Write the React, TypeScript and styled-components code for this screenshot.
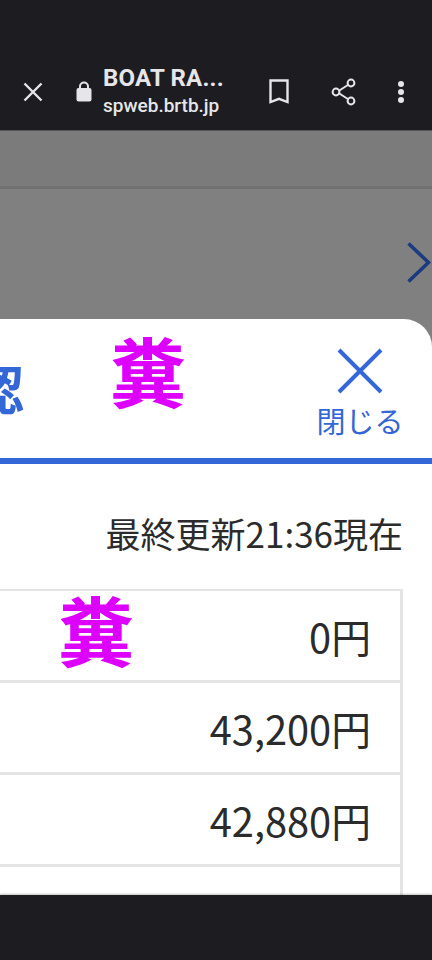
import styled, { createGlobalStyle } from 'styled-components';

const GlobalStyle = createGlobalStyle`
  html, body {
    margin: 0;
    padding: 0;
    background: #1c1c21;
  }

  * {
    box-sizing: border-box;
  }
`;

const Screen = styled.div`
  position: relative;
  display: flex;
  flex-direction: column;
  width: 432px;
  height: 960px;
  overflow: hidden;
  font-family: 'Noto Sans CJK JP', 'Noto Sans', sans-serif;
  background: #1c1c21;
`;

const StatusGap = styled.div`
  height: 50px;
  flex: none;
`;

const BrowserBar = styled.header`
  display: flex;
  align-items: center;
  height: 81px;
  flex: none;
  padding: 3px 0 0 23px;
  color: #e6e6ea;
  border-bottom: 1px solid #55555c;
`;

const TitleBlock = styled.div`
  display: flex;
  flex-direction: column;
  width: 150px;
  margin-left: 11px;
  font-family: Roboto, sans-serif;
`;

const Title = styled.div`
  font-size: 24px;
  line-height: 28px;
  font-weight: 700;
  letter-spacing: 0.2px;
`;

const Url = styled.div`
  font-size: 19px;
  line-height: 28px;
  font-weight: 500;
`;

const BarIcon = styled.svg<{ $left: number }>`
  flex: none;
  margin-left: ${(p) => p.$left}px;
`;

const Main = styled.main`
  flex: 1;
  display: flex;
  flex-direction: column;
  min-height: 0;
  background: #808080;
`;

const Backdrop = styled.div`
  height: 188px;
  flex: none;
  display: flex;
  flex-direction: column;
`;

const BackdropStrip = styled.div`
  height: 58px;
  background: #7b7b7b;
  border-bottom: 3px solid #717171;
`;

const BackdropBody = styled.div`
  display: flex;
  justify-content: flex-end;
  padding: 53px 1px 0 0;
`;

const Sheet = styled.section`
  flex: 1;
  display: flex;
  flex-direction: column;
  min-height: 0;
  overflow: hidden;
  background: #fff;
  border-top-right-radius: 28px;
  border-top-left-radius: 28px;
  margin-left: -28px;
`;

const SheetHeader = styled.div`
  display: flex;
  align-items: flex-start;
  justify-content: space-between;
  height: 145px;
  flex: none;
  padding: 0 28px 0 0;
  border-bottom: 6px solid #3366d6;
`;

const HeaderTitle = styled.h2`
  margin: 33px 0 0 0;
  font-size: 52px;
  line-height: 72px;
  font-weight: 700;
  color: #3366d6;
`;

const CloseButton = styled.button`
  display: flex;
  flex-direction: column;
  align-items: center;
  width: 88px;
  margin: 29px 0 0 0;
  padding: 0;
  border: 0;
  background: none;
  color: #3366d6;
  font-family: inherit;
  font-size: 29px;
  line-height: 40px;
`;

const CloseIcon = styled.svg`
  margin-bottom: 6px;
`;

const Updated = styled.p`
  margin: 45px 29px 0 0;
  text-align: right;
  font-size: 35px;
  line-height: 48px;
  color: #2b2b2b;
`;

const Table = styled.div`
  margin: 32px 29px 0 0;
  border-top: 2px solid #e4e4e4;
  border-right: 3px solid #e4e4e4;
`;

const Row = styled.div`
  display: flex;
  align-items: center;
  justify-content: flex-end;
  height: 92px;
  padding-right: 29px;
  border-bottom: 3px solid #e4e4e4;
  font-size: 39.8px;
  color: #2b2b2b;
`;

const BottomBar = styled.footer`
  height: 65px;
  flex: none;
  background: #1c1c21;
  box-shadow: 0 -1px 2px rgba(0, 0, 0, 0.25);
`;

const Sticker = styled.span<{ $left: number; $top: number }>`
  position: absolute;
  left: ${(p) => p.$left}px;
  top: ${(p) => p.$top}px;
  font-family: 'Noto Sans CJK SC', 'Noto Sans CJK JP', sans-serif;
  font-size: 76px;
  line-height: 80px;
  font-weight: 700;
  color: #dd00ff;
`;

export default function App() {
  return (
    <>
      <GlobalStyle />
      <Screen>
        <StatusGap />
        <BrowserBar>
          <svg width="20" height="20" viewBox="0 0 20 20">
            <path d="M1.5 1.5l17 17M18.5 1.5l-17 17" stroke="#e6e6ea" strokeWidth="2.4" fill="none" />
          </svg>
          <BarIcon $left={33} width="16" height="21" viewBox="0 0 16 21">
            <path d="M4 8V5.5a4 4 0 0 1 8 0V8" stroke="#e6e6ea" strokeWidth="2" fill="none" />
            <rect x="0.5" y="7" width="15" height="13.5" rx="2" fill="#e6e6ea" />
          </BarIcon>
          <TitleBlock>
            <Title>BOAT RA...</Title>
            <Url>spweb.brtb.jp</Url>
          </TitleBlock>
          <BarIcon $left={16} width="20" height="25" viewBox="0 0 20 25">
            <path d="M1.5 1.5h17v21.5L10 19.8 1.5 23z" stroke="#e6e6ea" strokeWidth="2.4" fill="none" />
          </BarIcon>
          <BarIcon $left={42} width="25" height="28" viewBox="0 0 25 28">
            <path d="M6 14L20 5M6 14l14 9" stroke="#e6e6ea" strokeWidth="2" fill="none" />
            <circle cx="5" cy="14" r="3.4" fill="#1c1c21" stroke="#e6e6ea" strokeWidth="2" />
            <circle cx="20" cy="5" r="3.4" fill="#1c1c21" stroke="#e6e6ea" strokeWidth="2" />
            <circle cx="20" cy="23" r="3.4" fill="#1c1c21" stroke="#e6e6ea" strokeWidth="2" />
          </BarIcon>
          <BarIcon $left={41} width="8" height="22" viewBox="0 0 8 22">
            <circle cx="4" cy="3" r="3" fill="#e6e6ea" />
            <circle cx="4" cy="11" r="3" fill="#e6e6ea" />
            <circle cx="4" cy="19" r="3" fill="#e6e6ea" />
          </BarIcon>
        </BrowserBar>
        <Main>
          <Backdrop>
            <BackdropStrip />
            <BackdropBody>
              <svg width="24" height="41" viewBox="0 0 24 41">
                <path d="M1.5 1.5L21.5 20.5 1.5 39.5" stroke="#1c3a80" strokeWidth="3.6" fill="none" />
              </svg>
            </BackdropBody>
          </Backdrop>
          <Sheet>
            <SheetHeader>
              <HeaderTitle>認</HeaderTitle>
              <CloseButton>
                <CloseIcon width="46" height="46" viewBox="0 0 46 46">
                  <path d="M2 2l42 42M44 2L2 44" stroke="#3366d6" strokeWidth="4" fill="none" />
                </CloseIcon>
                閉じる
              </CloseButton>
            </SheetHeader>
            <Updated>最終更新21:36現在</Updated>
            <Table>
              <Row>0円</Row>
              <Row>43,200円</Row>
              <Row>42,880円</Row>
              <Row />
            </Table>
          </Sheet>
        </Main>
        <BottomBar />
        <Sticker $left={110} $top={329}>糞</Sticker>
        <Sticker $left={58} $top={588}>糞</Sticker>
      </Screen>
    </>
  );
}
